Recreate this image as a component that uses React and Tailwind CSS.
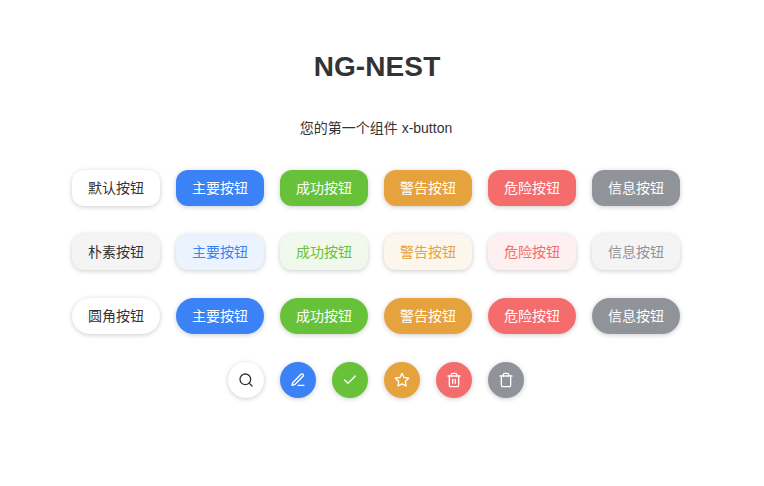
import { FiSearch, FiEdit3, FiCheck, FiStar, FiTrash2, FiTrash } from 'react-icons/fi';

const solid = [
  'bg-white text-[#333333]',
  'bg-[#3b82f6] text-white',
  'bg-[#67c23a] text-white',
  'bg-[#e6a23c] text-white',
  'bg-[#f56c6c] text-white',
  'bg-[#909399] text-white',
];

const plain = [
  'bg-[#f4f4f4] text-[#333333]',
  'bg-[#ebf3fe] text-[#3b82f6]',
  'bg-[#f0f9eb] text-[#67c23a]',
  'bg-[#fdf6ec] text-[#e6a23c]',
  'bg-[#feeff0] text-[#f56c6c]',
  'bg-[#f4f4f5] text-[#909399]',
];

const names = ['主要按钮', '成功按钮', '警告按钮', '危险按钮', '信息按钮'];
const icons = [FiSearch, FiEdit3, FiCheck, FiStar, FiTrash2, FiTrash];
const shadow = 'shadow-[0_1px_5px_rgba(0,0,0,0.2)]';

function ButtonRow({ first, colors, radius }) {
  return (
    <div className="flex gap-4">
      {[first, ...names].map((name, i) => (
        <button key={name} className={`h-9 w-[88px] whitespace-nowrap text-sm ${radius} ${shadow} ${colors[i]}`}>
          {name}
        </button>
      ))}
    </div>
  );
}

export default function App() {
  return (
    <main className="flex h-[486px] w-[752px] flex-col items-center bg-white pt-[47px] font-['Liberation_Sans','Noto_Sans_CJK_SC',sans-serif] text-[#333333]">
      <h1 className="pl-[2px] text-[28px] leading-10 font-bold tracking-[0.1px]">NG-NEST</h1>
      <p className="mt-[31px] text-sm leading-5">您的第一个组件 x-button</p>
      <div className="mt-8 flex flex-col items-center gap-7">
        <ButtonRow first="默认按钮" colors={solid} radius="rounded-xl" />
        <ButtonRow first="朴素按钮" colors={plain} radius="rounded-xl" />
        <ButtonRow first="圆角按钮" colors={solid} radius="rounded-full" />
        <div className="flex gap-4">
          {icons.map((Icon, i) => (
            <button key={i} className={`flex size-9 items-center justify-center rounded-full ${shadow} ${solid[i]}`}>
              <Icon size={16} />
            </button>
          ))}
        </div>
      </div>
    </main>
  );
}
